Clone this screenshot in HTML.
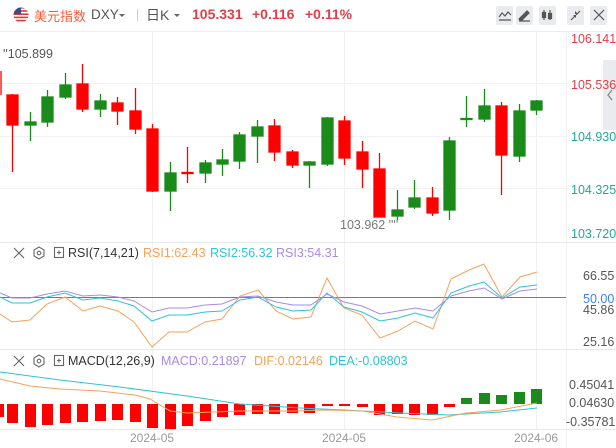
<!DOCTYPE html>
<html><head><meta charset="utf-8"><style>
body{margin:0;width:616px;height:448px;background:#fff;overflow:hidden;font-family:"Liberation Sans","Noto Sans CJK SC",sans-serif;position:relative}
.t{position:absolute;white-space:nowrap}
.btn{position:absolute;top:6px;width:17px;height:19px;background:#e9ebef;border-radius:2px}
.p{position:absolute;top:6px;font-size:14px;color:#e0404a;font-weight:bold;white-space:nowrap}
</style></head><body>
<svg width="616" height="448" style="position:absolute;left:0;top:0" font-family="Liberation Sans, sans-serif">
<line x1="0" y1="31.5" x2="616" y2="31.5" stroke="#eceef1"/>
<g stroke="#f0f1f3">
<line x1="152.5" y1="32" x2="152.5" y2="430"/><line x1="344.5" y1="32" x2="344.5" y2="430"/><line x1="536.5" y1="32" x2="536.5" y2="430"/>
<line x1="0" y1="83.5" x2="566" y2="83.5"/><line x1="0" y1="136.5" x2="566" y2="136.5"/><line x1="0" y1="188.5" x2="566" y2="188.5"/>
</g>
<line x1="566.5" y1="32" x2="566.5" y2="448" stroke="#f0f1f3"/>
<line x1="0" y1="242.5" x2="616" y2="242.5" stroke="#e6e8eb"/>
<line x1="0" y1="349.5" x2="616" y2="349.5" stroke="#e6e8eb"/>
<line x1="0" y1="429.5" x2="616" y2="429.5" stroke="#e6e8eb"/>
<rect x="603" y="60" width="13" height="70" fill="#e9ebef"/>
<path d="M612 90 L608 95 L612 100" fill="none" stroke="#888" stroke-width="1.3"/>
<g stroke-width="1.3">
<g fill="#ff0000" stroke="#ff0000">
<line x1="1" y1="71" x2="1" y2="95"/>
<line x1="12.5" y1="94" x2="12.5" y2="172"/><rect x="7" y="95" width="11" height="30"/>
<line x1="82.5" y1="64" x2="82.5" y2="112"/><rect x="77" y="84" width="11" height="25"/>
<line x1="117.5" y1="97" x2="117.5" y2="125"/><rect x="112" y="103" width="11" height="8"/>
<line x1="135.5" y1="88" x2="135.5" y2="134"/><rect x="130" y="111" width="11" height="18"/>
<line x1="152.5" y1="124" x2="152.5" y2="192"/><rect x="147" y="129" width="11" height="62"/>
<line x1="187.5" y1="147" x2="187.5" y2="183"/><rect x="182" y="172.5" width="11" height="1"/>
<line x1="274.5" y1="119" x2="274.5" y2="161"/><rect x="269" y="126" width="11" height="26"/>
<line x1="292.5" y1="150" x2="292.5" y2="168"/><rect x="287" y="152" width="11" height="13"/>
<line x1="344.5" y1="116" x2="344.5" y2="165"/><rect x="339" y="121" width="11" height="37"/>
<line x1="362.5" y1="141" x2="362.5" y2="188"/><rect x="357" y="152" width="11" height="17"/>
<line x1="379.5" y1="153" x2="379.5" y2="217"/><rect x="374" y="169" width="11" height="48"/>
<line x1="432.5" y1="187" x2="432.5" y2="216"/><rect x="427" y="198" width="11" height="15"/>
<line x1="501.5" y1="102" x2="501.5" y2="195"/><rect x="496" y="106" width="11" height="49"/>
</g>
<g fill="#1a8a1a" stroke="#1a8a1a">
<line x1="30.5" y1="112" x2="30.5" y2="141"/><rect x="25" y="122" width="11" height="3"/>
<line x1="47.5" y1="90" x2="47.5" y2="127"/><rect x="42" y="97" width="11" height="25"/>
<line x1="65.5" y1="73" x2="65.5" y2="99"/><rect x="60" y="85" width="11" height="12"/>
<line x1="100.5" y1="94" x2="100.5" y2="117"/><rect x="95" y="101" width="11" height="8"/>
<line x1="170.5" y1="162" x2="170.5" y2="211"/><rect x="165" y="173" width="11" height="18"/>
<line x1="205.5" y1="160" x2="205.5" y2="183"/><rect x="200" y="163" width="11" height="10"/>
<line x1="222.5" y1="149" x2="222.5" y2="176"/><rect x="217" y="160" width="11" height="4"/>
<line x1="239.5" y1="132" x2="239.5" y2="169"/><rect x="234" y="135" width="11" height="26"/>
<line x1="257.5" y1="120" x2="257.5" y2="163"/><rect x="252" y="127" width="11" height="9"/>
<line x1="309.5" y1="161" x2="309.5" y2="188"/><rect x="304" y="162" width="11" height="3"/>
<line x1="327.5" y1="117" x2="327.5" y2="166"/><rect x="322" y="118" width="11" height="46"/>
<line x1="397.5" y1="190" x2="397.5" y2="220"/><rect x="392" y="210" width="11" height="6"/>
<line x1="414.5" y1="180" x2="414.5" y2="209"/><rect x="409" y="198" width="11" height="9"/>
<line x1="449.5" y1="137" x2="449.5" y2="220"/><rect x="444" y="141" width="11" height="69"/>
<line x1="466.5" y1="96" x2="466.5" y2="127"/><rect x="461" y="118.5" width="11" height="1"/>
<line x1="484.5" y1="89" x2="484.5" y2="122"/><rect x="479" y="106" width="11" height="13"/>
<line x1="519.5" y1="104" x2="519.5" y2="162"/><rect x="514" y="111" width="11" height="45"/>
<line x1="536.5" y1="100" x2="536.5" y2="115"/><rect x="531" y="101" width="11" height="9"/>
</g></g>
<g font-size="12.5">
<text x="571" y="43" fill="#e0404a">106.141</text>
<text x="571" y="89" fill="#e0404a">105.536</text>
<text x="571" y="141" fill="#26a69a">104.930</text>
<text x="571" y="194" fill="#26a69a">104.325</text>
<text x="571" y="238" fill="#26a69a">103.720</text>
<text x="3" y="58" fill="#555">''105.899</text>
<text x="340" y="229" fill="#777">103.962 ''''</text>
</g>
<line x1="0" y1="297.5" x2="566" y2="297.5" stroke="#3b82f6" stroke-width="1"/>
<g fill="none" stroke-width="1">
<polyline stroke="#f5a25a" points="0,314 12,322 30,320 47,304 65,297 83,311 100,306 118,311 134,322 152,347 169,332 187,332 205,322 222,319 240,296 258,290 276,311 293,319 311,317 327,278 344,308 362,315 380,338 398,331 415,321 433,329 451,279 469,270 484,264 502,297 520,277 537,272"/>
<polyline stroke="#2ec4d6" points="0,297 12,303 30,303 47,297 65,293 83,300 100,298 118,301 134,306 152,321 169,315 187,315 205,312 222,311 240,300 258,297 276,307 293,311 311,310 327,293 344,307 362,312 380,321 398,318 415,313 433,318 451,293 469,286 484,282 502,298 520,287 537,285"/>
<polyline stroke="#a98be8" points="0,293 12,298 30,298 47,294 65,291 83,296 100,295 118,297 134,301 152,312 169,308 187,308 205,305 222,304 240,297 258,296 276,302 293,305 311,305 327,294 344,302 362,306 380,314 398,311 415,308 433,311 451,296 469,291 484,288 502,299 520,291 537,289"/>
</g>
<g font-size="12.5" fill="#555">
<text x="583" y="280">66.55</text>
<text x="583" y="303" fill="#3b82f6">50.00</text>
<text x="583" y="314">45.86</text>
<text x="583" y="346">25.16</text>
</g>
<g fill="#ff0000">
<rect x="0" y="404" width="4" height="13"/>
<rect x="7" y="404" width="11" height="19"/><rect x="25" y="404" width="11" height="23"/><rect x="42" y="404" width="11" height="21"/><rect x="60" y="404" width="11" height="19"/><rect x="77" y="404" width="11" height="18"/><rect x="95" y="404" width="11" height="17"/><rect x="112" y="404" width="11" height="16"/><rect x="130" y="404" width="11" height="18"/><rect x="147" y="404" width="11" height="24"/><rect x="165" y="404" width="11" height="25"/><rect x="182" y="404" width="11" height="22"/><rect x="200" y="404" width="11" height="17"/><rect x="217" y="404" width="11" height="13"/><rect x="234" y="404" width="11" height="11"/><rect x="252" y="404" width="11" height="10"/><rect x="269" y="404" width="11" height="10"/><rect x="287" y="404" width="11" height="9"/><rect x="304" y="404" width="11" height="9"/><rect x="322" y="404" width="11" height="2"/><rect x="339" y="404" width="11" height="2"/><rect x="357" y="404" width="11" height="3"/><rect x="374" y="404" width="11" height="11"/><rect x="392" y="404" width="11" height="10"/><rect x="409" y="404" width="11" height="11"/><rect x="427" y="404" width="11" height="11"/><rect x="444" y="404" width="11" height="3"/>
</g>
<g fill="#1a8a1a">
<rect x="461" y="398" width="11" height="6"/><rect x="479" y="393" width="11" height="11"/><rect x="496" y="395" width="11" height="9"/><rect x="514" y="392" width="11" height="12"/><rect x="531" y="389" width="11" height="15"/>
</g>
<g fill="none" stroke-width="1">
<polyline stroke="#2ec4d6" points="0,372 60,380 120,387 187,396 240,404 300,408 344,410 400,413 449,415 500,412 537,408"/>
<polyline stroke="#f5a25a" points="0,379 30,386 60,389 100,391 135,395 150,399 170,411 187,413 240,411 292,411 327,410 362,411 397,417 432,420 466,413 501,410 537,403"/>
</g>
<g font-size="12.5" fill="#555">
<text x="569" y="389">0.45041</text>
<text x="569" y="407">0.04630</text>
<text x="566" y="426">-0.35781</text>
</g>
<g font-size="12" fill="#999">
<text x="130" y="442">2024-05</text><text x="322" y="442">2024-05</text><text x="514" y="442">2024-06</text>
</g>
<g stroke="#666" fill="none" stroke-width="1.1">
<path d="M14 248 L24 258 M24 248 L14 258"/>
<path d="M39 247 L44 250 L44 256 L39 259 L34 256 L34 250 Z"/><circle cx="39" cy="253" r="1.8"/>
<rect x="54.5" y="247.5" width="9" height="10"/><path d="M57 252.5 H61 M59 250.5 V254.5"/>
<path d="M14 356 L24 366 M24 356 L14 366"/>
<path d="M39 355 L44 358 L44 364 L39 367 L34 364 L34 358 Z"/><circle cx="39" cy="361" r="1.8"/>
<rect x="54.5" y="355.5" width="9" height="10"/><path d="M57 360.5 H61 M59 358.5 V362.5"/>
</g>
<defs><clipPath id="c"><circle cx="21" cy="15" r="7.5"/></clipPath></defs>
<g clip-path="url(#c)">
<rect x="13" y="7" width="16" height="16" fill="#fff"/>
<g fill="#d63a3a"><rect x="13" y="7" width="16" height="1.6"/><rect x="13" y="10.2" width="16" height="1.6"/><rect x="13" y="13.4" width="16" height="1.6"/><rect x="13" y="16.6" width="16" height="1.6"/><rect x="13" y="19.8" width="16" height="1.6"/></g>
<rect x="13" y="7" width="8" height="7" fill="#3b4a8c"/>
</g>
<line x1="137.5" y1="9" x2="137.5" y2="21" stroke="#ccc"/>
<path d="M119 14 h6 l-3 3z M174 14 h6 l-3 3z" fill="#666"/>
</svg>
<div class="t" style="left:34px;top:6px;font-size:13px;color:#f0603a">美元指数</div>
<div class="t" style="left:91px;top:7px;font-size:13.5px;color:#555">DXY</div>
<div class="t" style="left:146px;top:5px;font-size:14px;color:#555">日K</div>
<div class="p" style="left:192px">105.331</div>
<div class="p" style="left:252px">+0.116</div>
<div class="p" style="left:305px">+0.11%</div>
<div class="btn" style="left:496px"></div><div class="btn" style="left:516px"></div><div class="btn" style="left:539px"></div><div class="btn" style="left:567px"></div><div class="btn" style="left:590px"></div>
<svg width="616" height="30" style="position:absolute;left:0;top:0">
<g stroke="#555" fill="none" stroke-width="1.2">
<path d="M499 17 L502 13 L505 16 L508 12 L511 15 M499 20 H511"/>
<path d="M519 19 L527 11 L529 13 L521 21 Z M519 21 H530" fill="#555"/>
<path d="M544 10 V20 M550 10 V20" /><rect x="542.5" y="12.5" width="3" height="5" fill="#555"/><rect x="548.5" y="13.5" width="3" height="5" fill="#555"/>
<path d="M571 20 L575 16 M580 11 L576 15" /><path d="M573 15 L576 15 L576 18 Z M578 14 L575 14 L575 11 Z" fill="#555" stroke="none"/>
<path d="M594 10 L604 20 M604 10 L594 20"/>
</g></svg>
<div class="t" style="left:68px;top:246px;font-size:12.5px;color:#333">RSI(7,14,21)</div>
<div class="t" style="left:143px;top:246px;font-size:12.5px;color:#f5a25a">RSI1:62.43</div>
<div class="t" style="left:210px;top:246px;font-size:12.5px;color:#2ec4d6">RSI2:56.32</div>
<div class="t" style="left:276px;top:246px;font-size:12.5px;color:#a98be8">RSI3:54.31</div>
<div class="t" style="left:68px;top:354px;font-size:12.5px;color:#333">MACD(12,26,9)</div>
<div class="t" style="left:161px;top:354px;font-size:12.5px;color:#a98be8">MACD:0.21897</div>
<div class="t" style="left:254px;top:354px;font-size:12.5px;color:#f5a25a">DIF:0.02146</div>
<div class="t" style="left:329px;top:354px;font-size:12.5px;color:#2ec4d6">DEA:-0.08803</div>
</body></html>
